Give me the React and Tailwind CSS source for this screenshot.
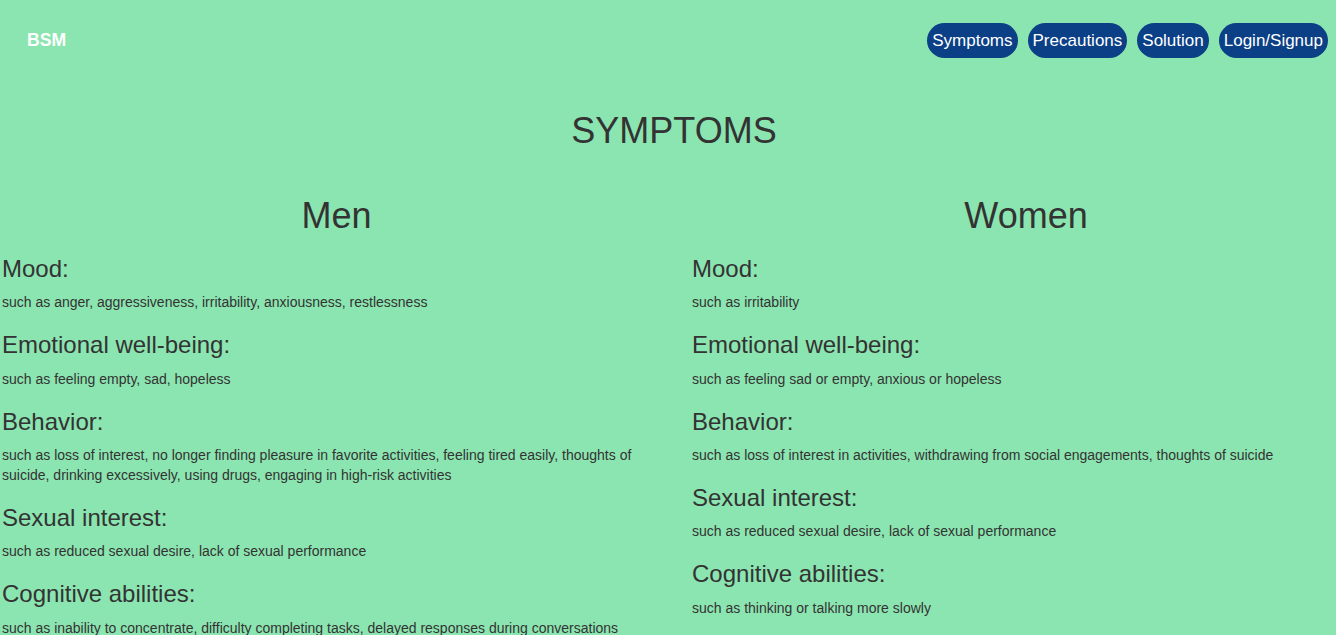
import React from "react";

const men = [
  ["Mood:", "such as anger, aggressiveness, irritability, anxiousness, restlessness"],
  ["Emotional well-being:", "such as feeling empty, sad, hopeless"],
  ["Behavior:", "such as loss of interest, no longer finding pleasure in favorite activities, feeling tired easily, thoughts of suicide, drinking excessively, using drugs, engaging in high-risk activities"],
  ["Sexual interest:", "such as reduced sexual desire, lack of sexual performance"],
  ["Cognitive abilities:", "such as inability to concentrate, difficulty completing tasks, delayed responses during conversations"],
];

const women = [
  ["Mood:", "such as irritability"],
  ["Emotional well-being:", "such as feeling sad or empty, anxious or hopeless"],
  ["Behavior:", "such as loss of interest in activities, withdrawing from social engagements, thoughts of suicide"],
  ["Sexual interest:", "such as reduced sexual desire, lack of sexual performance"],
  ["Cognitive abilities:", "such as thinking or talking more slowly"],
];

function Column({ title, items, width }) {
  return (
    <div className={width}>
      <h1 className="text-center text-[36px] leading-[39.6px] font-normal">{title}</h1>
      {items.map(([h, p]) => (
        <div key={h}>
          <h3 className="mt-[20px] mb-[10px] text-[24px] leading-[26.4px] font-normal">{h}</h3>
          <p className="mb-[10px] text-[14px] leading-[20px]">{p}</p>
        </div>
      ))}
    </div>
  );
}

export default function App() {
  return (
    <div
      className="min-h-[635px] w-[1336px] overflow-hidden bg-[#8be5b0] text-[#333333]"
      style={{ fontFamily: '"Liberation Sans", Arial, Helvetica, sans-serif' }}
    >
      <nav className="flex items-center justify-between pt-[23px] pl-[27px] pr-[8px]">
        <span className="text-[17.6px] font-bold text-white leading-[35px]">BSM</span>
        <div className="flex gap-[10px]">
          {["Symptoms", "Precautions", "Solution", "Login/Signup"].map((t) => (
            <button
              key={t}
              className="h-[35px] rounded-full bg-[#0b3f86] px-[5px] text-[17px] leading-[35px] text-white"
            >
              {t}
            </button>
          ))}
        </div>
      </nav>
      <h1 className="mt-[53px] pl-[12px] text-center text-[36px] leading-[39.6px] font-normal">SYMPTOMS</h1>
      <div className="mt-[45.5px] flex gap-[21px] pl-[2px]">
        <Column title="Men" items={men} width="w-[669px] shrink-0" />
        <Column title="Women" items={women} width="w-[668px] shrink-0" />
      </div>
    </div>
  );
}
